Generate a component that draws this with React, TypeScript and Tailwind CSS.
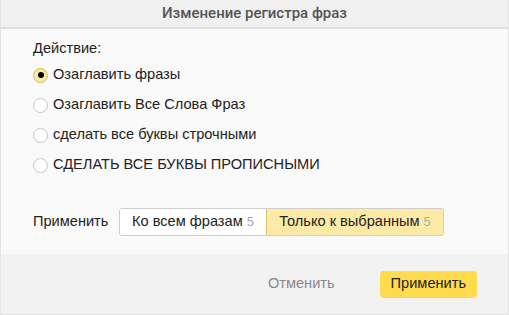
import React from "react";

const options = [
  "Озаглавить фразы",
  "Озаглавить Все Слова Фраз",
  "сделать все буквы строчными",
  "СДЕЛАТЬ ВСЕ БУКВЫ ПРОПИСНЫМИ",
];

const App = () => {
  return (
    <div className="w-[509px] h-[315px] flex flex-col bg-[#fafafa] border-x border-b border-[#e3e3e3] font-['Liberation_Sans',Arial,sans-serif] text-[14.6px] text-[#222]">
      <div className="h-[29px] shrink-0 flex items-center justify-center bg-[#f0f0f0] border-b-2 border-[#dedede] text-[#555] font-medium text-[15px] font-['Roboto',sans-serif]">
        Изменение регистра фраз
      </div>
      <div className="flex-1 flex flex-col pl-[32px] pt-[10px]">
        <div className="leading-[18px]">Действие:</div>
        <div className="flex flex-col mt-[9px] gap-[12px]">
          {options.map((label, i) => (
            <label key={label} className="flex items-center gap-[5px] h-[18px]">
              {i === 0 ? (
                <span className="w-[15px] h-[15px] rounded-full border border-[#d9b95a] bg-[#fbe8a6] flex items-center justify-center">
                  <span className="w-[6px] h-[6px] rounded-full bg-black" />
                </span>
              ) : (
                <span className="w-[15px] h-[15px] rounded-full border border-[#c6c6c6] bg-white" />
              )}
              <span>{label}</span>
            </label>
          ))}
        </div>
        <div className="flex items-center mt-[34px]">
          <span className="w-[86px]">Применить</span>
          <div className="flex h-[28px] rounded-[3px] border border-[#cfcfcf] overflow-hidden">
            <button className="w-[146px] bg-white flex items-center justify-center">
              Ко всем фразам<span className="ml-[4px] text-[13px] text-[#aaa]">5</span>
            </button>
            <button className="w-[177px] bg-[#fdeaa7] border-l border-[#dcc26c] flex items-center justify-center">
              Только к выбранным<span className="ml-[4px] text-[13px] text-[#aaa]">5</span>
            </button>
          </div>
        </div>
      </div>
      <div className="h-[60px] shrink-0 bg-[#f2f2f2] flex items-center justify-end pr-[31px] gap-[45px]">
        <button className="text-[#888]">Отменить</button>
        <button className="h-[27px] px-[11px] rounded-[4px] bg-[#ffdb4d] text-[#222]">Применить</button>
      </div>
    </div>
  );
};

export default App;
